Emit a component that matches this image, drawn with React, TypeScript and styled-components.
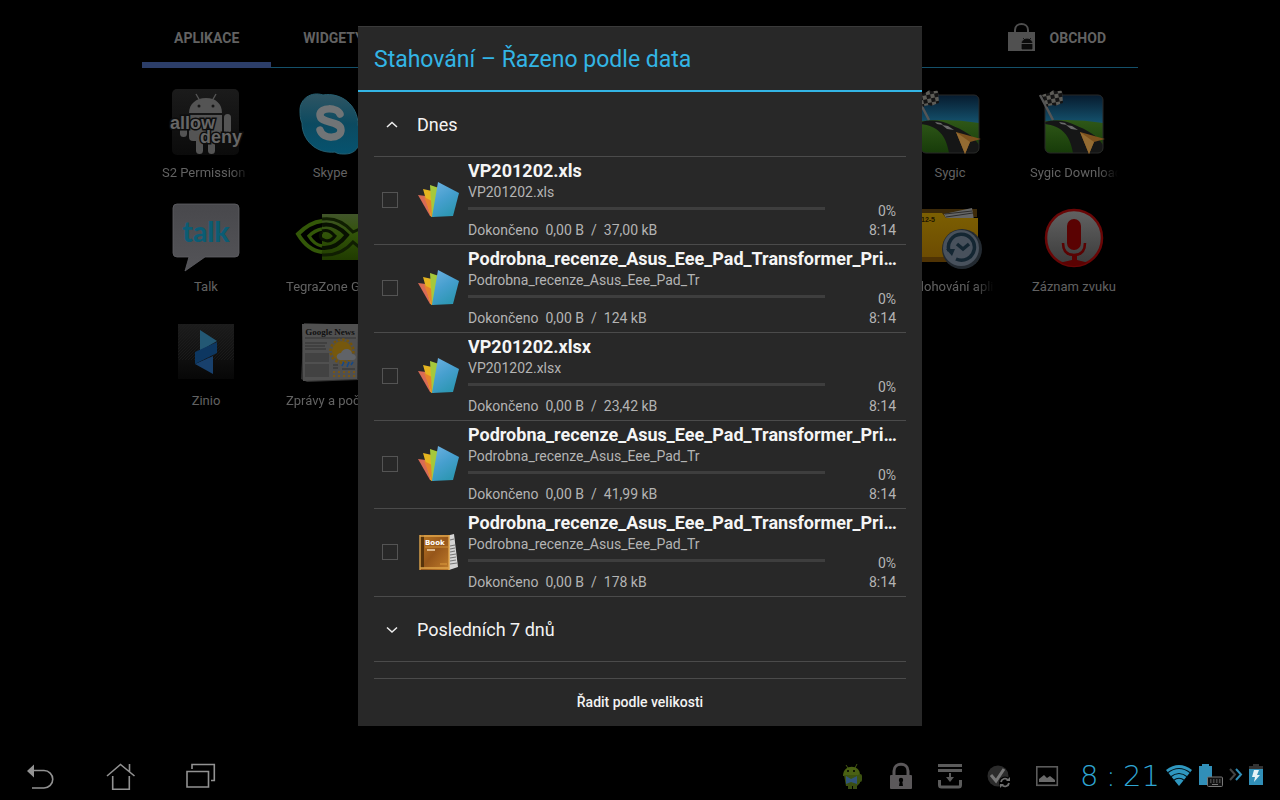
import React from "react";
import styled, { createGlobalStyle } from "styled-components";

const GlobalStyle = createGlobalStyle`
  * { box-sizing: border-box; }
  body { margin: 0; background: #000; color: #eee; font-family: Roboto, "Noto Sans", sans-serif; }
  button { border: 0; margin: 0; padding: 0; background: none; color: inherit; font: inherit; cursor: pointer; }
  h1, h2, p { margin: 0; font-weight: 400; }
  svg { display: block; flex: none; }
`;

const Screen = styled.div`
  display: flex;
  flex-direction: column;
  min-height: 100vh;
`;

const Workspace = styled.div`
  position: relative;
  flex: 1;
  display: flex;
  flex-direction: column;
`;

const Launcher = styled.main`
  width: 100%;
  max-width: 996px;
  margin: 0 auto;
  color: #626262;
`;

const TabBar = styled.div`
  display: flex;
  align-items: stretch;
  height: 68px;
  border-bottom: 1px solid #14506a;
`;

const Tab = styled.button<{ $active?: boolean }>`
  padding: 18px 32px 4px;
  margin-bottom: -1px;
  border-bottom: ${(p) => (p.$active ? "6px solid #2c3e69" : "0")};
  padding-bottom: ${(p) => (p.$active ? "4px" : "10px")};
  font-size: 14px;
  font-weight: 700;
  text-transform: uppercase;
`;

const StoreButton = styled.button`
  display: flex;
  align-items: center;
  gap: 13px;
  margin-left: auto;
  padding: 8px 32px 0 0;
  font-size: 14px;
  font-weight: 700;
`;

const AppGrid = styled.div`
  display: grid;
  grid-template-columns: repeat(8, 1fr);
  padding: 18px 2px;
`;

const AppCell = styled.button<{ $column: number; $row: number }>`
  grid-column: ${(p) => p.$column};
  grid-row: ${(p) => p.$row};
  display: flex;
  flex-direction: column;
  align-items: center;
  gap: 6px;
  padding-bottom: 18px;
`;

const AppLabel = styled.span<{ $fade?: boolean }>`
  width: 88px;
  overflow: hidden;
  white-space: nowrap;
  font-size: 13px;
  line-height: 18px;
  text-align: ${(p) => (p.$fade ? "left" : "center")};
  mask-image: ${(p) => (p.$fade ? "linear-gradient(to right, #000 78%, transparent)" : "none")};
`;

const Overlay = styled.div`
  position: absolute;
  inset: 0;
  display: flex;
  align-items: center;
  justify-content: center;
`;

const Dialog = styled.section`
  width: 564px;
  max-width: 100%;
  background: #282828;
  box-shadow: inset 0 1px #3a3a3a;
`;

const DialogTitle = styled.h1`
  padding: 19px 16px 15px;
  border-bottom: 2px solid #33b5e5;
  color: #33b5e5;
  font-size: 23px;
  line-height: 30px;
`;

const DialogBody = styled.div`
  padding: 0 16px;
`;

const GroupButton = styled.button`
  display: flex;
  align-items: center;
  gap: 19px;
  width: 100%;
  padding: 21px 12px 19px;
  border-bottom: 1px solid #4b4b4b;
  color: #f3f3f3;
  font-size: 18px;
  line-height: 24px;
`;

const FileList = styled.ul`
  margin: 0;
  padding: 0;
  list-style: none;
`;

const FileRow = styled.li`
  display: flex;
  align-items: center;
  padding: 3px 10px 4px 8px;
  border-bottom: 1px solid #4b4b4b;
`;

const Tick = styled.input`
  appearance: none;
  flex: none;
  width: 16px;
  height: 16px;
  margin: 0 20px 0 0;
  border: 1px solid #545454;
  &:checked { background: #33b5e5; }
`;

const FileInfo = styled.div`
  flex: 1;
  min-width: 0;
  margin-left: 8px;
  color: #b4b4b4;
  font-size: 14px;
  line-height: 20px;
`;

const FileTitle = styled.label`
  display: block;
  margin-right: -6px;
  overflow: hidden;
  text-overflow: ellipsis;
  white-space: nowrap;
  color: #f5f5f5;
  font-size: 18px;
  font-weight: 700;
  line-height: 22px;
`;

const FileDetails = styled.div`
  display: flex;
`;

const Transfer = styled.div`
  flex: 1;
`;

const Progress = styled.progress`
  appearance: none;
  display: block;
  width: 100%;
  height: 3px;
  margin: 5px 0 10px;
  border: 0;
  background: #3e3e3e;
  &::-webkit-progress-bar { background: #3e3e3e; }
  &::-webkit-progress-value { background: #33b5e5; }
`;

const Amounts = styled.p`
  display: flex;
  gap: 7px;
`;

const Timing = styled.div`
  width: 71px;
  text-align: right;
`;

const Percent = styled.p`
  line-height: 18px;
`;

const SortButton = styled.button`
  width: 100%;
  margin-top: 16px;
  padding: 13px 0 14px;
  border-top: 1px solid #4b4b4b;
  color: #f3f3f3;
  font-size: 14px;
  font-weight: 500;
  line-height: 20px;
`;

const SystemBar = styled.footer`
  display: flex;
  align-items: center;
  height: 48px;
  padding-right: 16px;
`;

const NavButton = styled.button`
  width: 80px;
  height: 48px;
`;

const Notifications = styled.div`
  display: flex;
  gap: 25px;
  margin-left: auto;
`;

const SystemStatus = styled.div`
  display: flex;
  align-items: center;
  gap: 5px;
  margin-left: 20px;
`;

const Clock = styled.time`
  display: flex;
  justify-content: space-between;
  width: 80px;
  color: #2fa6d3;
  font-family: "DejaVu Sans", sans-serif;
  font-size: 29px;
  font-weight: 200;
  line-height: 48px;
`;

const Art = ({ children }: { children: React.ReactNode }) => (
  <svg width="76" height="72" viewBox="0 0 76 72" aria-hidden="true">{children}</svg>
);

const PermissionArt = () => (
  <Art>
    <defs>
      <linearGradient id="permBg" x1="0" y1="0" x2="0" y2="1">
        <stop offset="0" stopColor="#1b1b1b" /><stop offset="1" stopColor="#0b0b0b" />
      </linearGradient>
    </defs>
    <rect x="4" y="3" width="67" height="66" rx="5" fill="url(#permBg)" />
    <g fill="#545454">
      <path d="M21 27c0-9 7-15 17-15s16 6 16 15z" />
      <path d="M28 8l4 7M48 8l-4 7" stroke="#545454" strokeWidth="1.4" />
      <path d="M21 29h33v22q0 4-4 4H25q-4 0-4-4z" />
      <rect x="12" y="29" width="7" height="22" rx="3.5" />
      <rect x="56" y="28" width="7" height="22" rx="3.5" />
      <rect x="28" y="48" width="7" height="20" rx="3.5" />
      <rect x="40" y="48" width="7" height="20" rx="3.5" />
    </g>
    <circle cx="31" cy="20" r="1.5" fill="#161616" /><circle cx="45" cy="20" r="1.5" fill="#161616" />
    <g fontFamily="Liberation Sans, sans-serif" fontWeight="700" fontSize="18" fill="#666" stroke="#0d0d0d" strokeWidth="3" paintOrder="stroke">
      <text x="2" y="43">allow</text>
      <text x="32" y="57">deny</text>
    </g>
  </Art>
);

const SkypeArt = () => (
  <Art>
    <defs>
      <linearGradient id="skype" x1="0" y1="0" x2="0" y2="1">
        <stop offset="0" stopColor="#2f5563" /><stop offset=".5" stopColor="#0c4a60" /><stop offset="1" stopColor="#06536f" />
      </linearGradient>
    </defs>
    <path d="M8 24C8 13 19 5 31 9c18-3 35 10 35 30 5 11 3 29-13 29-5 0-7 0-10-2-19 2-33-12-33-29-2-4-2-9-2-13z" fill="url(#skype)" stroke="#255e70" strokeWidth="1" />
    <path d="M48 28c-3-7-20-7-20 1 0 9 21 5 21 15 0 9-18 10-21 0" fill="none" stroke="#707476" strokeWidth="7.5" strokeLinecap="round" />
  </Art>
);

const TalkArt = () => (
  <Art>
    <defs>
      <linearGradient id="talk" x1="0" y1="0" x2="0" y2="1">
        <stop offset="0" stopColor="#48484c" /><stop offset="1" stopColor="#545458" />
      </linearGradient>
    </defs>
    <path d="M9 4h58q4 0 4 4v45q0 4-4 4H37L17 71l4-14H9q-4 0-4-4V8q0-4 4-4z" fill="url(#talk)" stroke="#606064" strokeWidth=".8" />
    <text x="38" y="42" textAnchor="middle" fontFamily="Lato, sans-serif" fontWeight="900" fontSize="28" fill="#0b5c74">talk</text>
  </Art>
);

const TegraArt = () => (
  <Art>
    <defs>
      <linearGradient id="tegra" x1="0" y1="0" x2="0" y2="1">
        <stop offset="0" stopColor="#41552a" /><stop offset=".45" stopColor="#315308" /><stop offset="1" stopColor="#203b00" />
      </linearGradient>
    </defs>
    <path d="M30 14h42v46H30z" fill="url(#tegra)" />
    <g fill="none" strokeWidth="4">
      <path d="M30 21C20 22 11 29 6 34c6 10 14 17 24 18" stroke="#335708" />
      <path d="M30 29c-6 1-10 4-13 7 3 5 7 9 13 10" stroke="#335708" strokeWidth="3.4" />
      <path d="M30 25c10-2 18 3 25 10-7 9-15 14-25 13" stroke="#081001" />
      <path d="M30 31c7-2 10 2 13 5-3 4-7 6-11 4-4-1-5-5-2-8" stroke="#081001" strokeWidth="3" />
      <path d="M30 19c14-2 24 5 31 13l11-5M30 55c16 1 25-6 31-13l11 9" stroke="#101e02" strokeWidth="3" />
    </g>
  </Art>
);

const ZinioArt = () => (
  <Art>
    <defs>
      <pattern id="zinioLines" width="3" height="3" patternUnits="userSpaceOnUse">
        <path d="M0 3L3 0" stroke="#1d1d1d" strokeWidth=".8" />
      </pattern>
      <linearGradient id="zinioBg" x1="0" y1="0" x2="0" y2="1">
        <stop offset="0" stopColor="#1c1c1c" /><stop offset="1" stopColor="#070707" />
      </linearGradient>
    </defs>
    <path d="M10 10h56v55H10z" fill="url(#zinioBg)" />
    <path d="M10 10h56v36H10z" fill="url(#zinioLines)" />
    <path d="M32 16l17 11-17 10z" fill="#235874" />
    <path d="M27 50l18-8v18z" fill="#18406c" />
    <path d="M49 28v11L27 50V38z" fill="#0d3761" />
  </Art>
);

const NewsArt = () => (
  <Art>
    <path d="M12 9l54 2 1 55-52 2-6-3z" fill="#303030" />
    <path d="M10 10h56l-1 55-54 2z" fill="#505050" />
    <text x="38" y="21" textAnchor="middle" fontFamily="Liberation Serif, serif" fontWeight="700" fontSize="9" fill="#111">Google News</text>
    <path d="M13 24h51" stroke="#333" />
    <path d="M13 29h22M13 32h20M13 35h21" stroke="#303030" strokeWidth="1.2" />
    <path d="M13 39h24v9H13zM13 50h24v13H13z" fill="#424242" />
    <circle cx="50" cy="37" r="11.5" fill="none" stroke="#755409" strokeWidth="2.5" strokeDasharray="2.5 2" />
    <circle cx="50" cy="37" r="10" fill="#76580d" />
    <path d="M48 46c-5-1-4-7 1-7 2-6 11-5 11 1 5 0 5 6 1 6z" fill="#606368" />
    <path d="M52 48l-2 4M57 48l-2 5M61 48l-2 3" stroke="#164986" strokeWidth="1.6" />
    <path d="M41 58h22M41 62h22" stroke="#765617" strokeWidth="2" strokeDasharray="2 3" />
    <path d="M41 51h5M41 54h5M50 55h13" stroke="#303030" />
  </Art>
);

const SygicArt = () => (
  <Art>
    <defs>
      <linearGradient id="sygicSky" x1="0" y1="0" x2="0" y2="1">
        <stop offset="0" stopColor="#071b2e" /><stop offset="1" stopColor="#155672" />
      </linearGradient>
      <linearGradient id="sygicGrass" x1="0" y1="0" x2="0" y2="1">
        <stop offset="0" stopColor="#2f5818" /><stop offset="1" stopColor="#173b09" />
      </linearGradient>
      <pattern id="flagCheck" width="8" height="8" patternUnits="userSpaceOnUse" patternTransform="rotate(-12)">
        <path d="M0 0h8v8H0z" fill="#5d5c57" /><path d="M0 0h4v4H0zM4 4h4v4H4z" fill="#141414" />
      </pattern>
      <clipPath id="sygicClip"><rect x="9" y="9" width="58" height="58" rx="5" /></clipPath>
    </defs>
    <g clipPath="url(#sygicClip)">
      <path d="M9 9h58v30H9z" fill="url(#sygicSky)" />
      <path d="M9 35q29-3 58 2v30H9z" fill="url(#sygicGrass)" />
      <path d="M9 36c12-3 22-1 30 3 12 5 22 10 28 20v8H37c-3-19-12-27-28-29z" fill="#151616" />
      <path d="M23 36l6 1 2 2-6-1zM30 39l6 1 6 4-7-1z" fill="#6b6b6b" />
    </g>
    <rect x="9" y="9" width="58" height="58" rx="5" fill="none" stroke="#292929" />
    <path d="M4 9l13 25" stroke="#555" strokeWidth="2.5" />
    <path d="M6 9c6-3 6 0 11-5 4 3 6 0 9 1l1 12c-5 1-6 4-10 2-3 1-4 0-6 2z" fill="url(#flagCheck)" />
    <path d="M44 46l25 7-11 3-5 12z" fill="#7c511d" />
    <path d="M44 46l14 10-5 12z" fill="#936b32" />
  </Art>
);

const BackupArt = () => (
  <Art>
    <defs>
      <linearGradient id="folder" x1="0" y1="0" x2="0" y2="1">
        <stop offset="0" stopColor="#7c5f02" /><stop offset="1" stopColor="#6b4a02" />
      </linearGradient>
    </defs>
    <path d="M4 9h61v8H4z" fill="#3d2a09" />
    <path d="M32 14l28-6 2 12-27 1z" fill="#666" /><path d="M34 17l27-4M33 14l27-3" stroke="#2c2c2c" />
    <path d="M4 13h26l4 5h32v42q0 2-2 2H4z" fill="url(#folder)" />
    <path d="M4 57h60v5H4z" fill="#4f3304" />
    <text x="9" y="22" fontFamily="Liberation Sans, sans-serif" fontWeight="700" fontSize="7" fill="#201500">12-5</text>
    <circle cx="50" cy="49" r="20" fill="#232a31" />
    <circle cx="49" cy="48" r="18" fill="#48515c" />
    <path d="M37 51a13 13 0 1 1 7 8" fill="none" stroke="#142632" strokeWidth="3.5" />
    <path d="M34 49l9 0-3 7z" fill="#142632" />
    <path d="M45 44l6 5 6-5" fill="none" stroke="#142632" strokeWidth="3.5" />
  </Art>
);

const RecorderArt = () => (
  <Art>
    <defs>
      <linearGradient id="recorder" x1="0" y1="0" x2="0" y2="1">
        <stop offset="0" stopColor="#626262" /><stop offset="1" stopColor="#3a3a3a" />
      </linearGradient>
      <clipPath id="recorderClip"><circle cx="38" cy="38" r="28" /></clipPath>
    </defs>
    <circle cx="38" cy="38" r="28" fill="url(#recorder)" stroke="#690606" strokeWidth="2.5" />
    <g fill="#5a0202">
      <rect x="31" y="19" width="14" height="31" rx="7" />
      <path d="M36 54h5v6l12 3v8H23v-8l13-3z" clipPath="url(#recorderClip)" />
    </g>
    <path d="M27 43c0 8 4 12 11 12s11-4 11-12" fill="none" stroke="#5a0202" strokeWidth="2.5" />
  </Art>
);

const StoreIcon = () => (
  <svg width="29" height="30" viewBox="0 0 29 30" aria-hidden="true">
    <path d="M7 10V7c0-8 13-8 13 0v3" fill="none" stroke="#4e4e4e" strokeWidth="2" />
    <path d="M0 9h27v19H0z" fill="#505050" />
    <path d="M14 20a5 4 0 0 1 10 0zM14 21h10v5H14zM15 15l2 2M23 15l-2 2" fill="#0b0b0b" stroke="#0b0b0b" strokeWidth=".8" />
    <path d="M13 20.500h11" stroke="#505050" />
  </svg>
);

const Chevron = ({ up }: { up?: boolean }) => (
  <svg width="12" height="8" viewBox="0 0 12 8" fill="none" stroke="#eee" strokeWidth="1.5" aria-hidden="true">
    <path d={up ? "M1 6l5-4.500L11 6" : "M1 1.500L6 6l5-4.500"} />
  </svg>
);

const SheetsIcon = () => (
  <svg width="42" height="40" viewBox="0 0 42 40" aria-hidden="true">
    <defs>
      <linearGradient id="sheetBlue" x1="0" y1="0" x2=".5" y2="1">
        <stop offset="0" stopColor="#6fb2e2" /><stop offset=".55" stopColor="#469fce" /><stop offset="1" stopColor="#2e97b4" />
      </linearGradient>
    </defs>
    <path d="M0 15l8 1 6 20-2 0z" fill="#d96b55" />
    <path d="M5 9l9 2 2 25-3 1z" fill="#e5b520" />
    <path d="M6 17l8 4v16z" fill="#e7832d" />
    <path d="M12 5l9 3-5 29-2-1z" fill="#a5c83c" />
    <path d="M20 2l21 11-6 23-21 1z" fill="url(#sheetBlue)" />
  </svg>
);

const BookIcon = () => (
  <svg width="42" height="40" viewBox="0 0 42 40" aria-hidden="true">
    <defs>
      <linearGradient id="bookCover" x1="0" y1="0" x2="1" y2="1">
        <stop offset="0" stopColor="#b97824" /><stop offset=".5" stopColor="#96561a" /><stop offset="1" stopColor="#c07c2b" />
      </linearGradient>
    </defs>
    <path d="M28 4l8-2 4 33-9 3z" fill="#d5d5d5" />
    <path d="M32 8l4-1M32 14l5-1M32 17l5-1M32 20l5-1M32 23l6-1M32 26l6-1M32 29l6-1M32 32l7-1" stroke="#777" strokeWidth="1.2" />
    <path d="M2 3h29v35H2z" fill="url(#bookCover)" />
    <path d="M2 3h4v33H2z" fill="#56330c" />
    <path d="M2 4h29M2 36h29M31 3v35M2 3v35" stroke="#e0a54b" strokeWidth="1.4" />
    <path d="M7 15h23" stroke="#d19138" />
    <text x="7" y="13" fontFamily="DejaVu Sans, sans-serif" fontWeight="700" fontSize="7" fill="#fff">Book</text>
    <path d="M9 18h8" stroke="#f0d6b0" strokeWidth="1.5" /><path d="M22 32h7" stroke="#dc9c3f" />
  </svg>
);

const NavIcon = ({ d, fill }: { d: string; fill?: string }) => (
  <svg width="80" height="48" viewBox="0 0 80 48" fill="none" stroke="#929292" strokeWidth="1.6" aria-hidden="true">
    <path d={d} />
    {fill && <path d={fill} fill="#929292" stroke="none" />}
  </svg>
);

const Note = ({ label, children }: { label: string; children: React.ReactNode }) => (
  <svg width="24" height="28" viewBox="0 0 24 28" role="img" aria-label={label}>{children}</svg>
);

const apps = [
  { name: "S2 Permission Checker", column: 1, row: 1, art: <PermissionArt />, fade: true },
  { name: "Skype", column: 2, row: 1, art: <SkypeArt /> },
  { name: "Sygic", column: 7, row: 1, art: <SygicArt /> },
  { name: "Sygic Downloader", column: 8, row: 1, art: <SygicArt />, fade: true },
  { name: "Talk", column: 1, row: 2, art: <TalkArt /> },
  { name: "TegraZone Games", column: 2, row: 2, art: <TegraArt />, fade: true },
  { name: "Zálohování aplikací", column: 7, row: 2, art: <BackupArt />, fade: true },
  { name: "Záznam zvuku", column: 8, row: 2, art: <RecorderArt /> },
  { name: "Zinio", column: 1, row: 3, art: <ZinioArt /> },
  { name: "Zprávy a počasí", column: 2, row: 3, art: <NewsArt />, fade: true },
];

const longTitle = "Podrobna_recenze_Asus_Eee_Pad_Transformer_Prime";
const longName = "Podrobna_recenze_Asus_Eee_Pad_Tr";
const files = [
  { title: "VP201202.xls", name: "VP201202.xls", size: "37,00 kB" },
  { title: longTitle, name: longName, size: "124 kB" },
  { title: "VP201202.xlsx", name: "VP201202.xlsx", size: "23,42 kB" },
  { title: longTitle, name: longName, size: "41,99 kB" },
  { title: longTitle, name: longName, size: "178 kB", book: true },
];

export default function App() {
  return (
    <Screen>
      <GlobalStyle />
      <Workspace>
        <Launcher>
          <TabBar>
            <Tab $active>Aplikace</Tab>
            <Tab>Widgety</Tab>
            <StoreButton><StoreIcon />OBCHOD</StoreButton>
          </TabBar>
          <AppGrid>
            {apps.map((a) => (
              <AppCell key={a.name} $column={a.column} $row={a.row}>
                {a.art}
                <AppLabel $fade={a.fade}>{a.name}</AppLabel>
              </AppCell>
            ))}
          </AppGrid>
        </Launcher>
        <Overlay>
          <Dialog role="dialog" aria-labelledby="dialog-title">
            <DialogTitle id="dialog-title">Stahování – Řazeno podle data</DialogTitle>
            <DialogBody>
              <GroupButton aria-expanded="true"><Chevron up />Dnes</GroupButton>
              <FileList>
                {files.map((f, i) => (
                  <FileRow key={i}>
                    <Tick type="checkbox" id={`file-${i}`} />
                    {f.book ? <BookIcon /> : <SheetsIcon />}
                    <FileInfo>
                      <FileTitle htmlFor={`file-${i}`}>{f.title}</FileTitle>
                      <p>{f.name}</p>
                      <FileDetails>
                        <Transfer>
                          <Progress value={0} max={100} aria-label={f.title} />
                          <Amounts><span>Dokončeno</span><span>0,00 B</span><span>/</span><span>{f.size}</span></Amounts>
                        </Transfer>
                        <Timing><Percent>0%</Percent><p>8:14</p></Timing>
                      </FileDetails>
                    </FileInfo>
                  </FileRow>
                ))}
              </FileList>
              <GroupButton aria-expanded="false"><Chevron />Posledních 7 dnů</GroupButton>
              <SortButton>Řadit podle velikosti</SortButton>
            </DialogBody>
          </Dialog>
        </Overlay>
      </Workspace>
      <SystemBar>
        <NavButton aria-label="Zpět">
          <NavIcon d="M33 18.5h11a8.7 8.7 0 0 1 0 17.500H32" fill="M27 19l7-6.500v13z" />
        </NavButton>
        <NavButton aria-label="Domů">
          <NavIcon d="M27 24l13.500-11.500L54.500 24M49.500 12v7.500M32.700 24v13.300h16.600V24" />
        </NavButton>
        <NavButton aria-label="Poslední aplikace">
          <NavIcon d="M27 19.500h21.500v15.500H27zM32 17v-4.500h22.300v16H51" />
        </NavButton>
        <Notifications>
          <Note label="Android">
            <path d="M6 3l2 3M17 2l-2 4" stroke="#455914" />
            <path d="M3 14C3 2 20 2 20 13z" fill="#4a6113" />
            <path d="M4 13h16v8l-3 3H6z" fill="#3c5210" />
            <rect x="18" y="12" width="4" height="8" rx="2" fill="#3c5210" />
            <path d="M8 21h4v6H8zM13 21h4v6h-4z" fill="#3a4d12" />
            <path d="M6 14l5 3 6-3v8l-6-2-5 2z" fill="#31547a" />
            <circle cx="8" cy="9" r="1" /><circle cx="14" cy="9" r="1" />
          </Note>
          <Note label="Zámek">
            <path d="M5 14V9c0-9 14-9 14 0v5" fill="none" stroke="#5b585a" strokeWidth="3" />
            <rect x="1" y="13" width="22" height="14" rx="1" fill="#5b585a" />
            <circle cx="12" cy="18" r="2.200" /><path d="M11 18h2l1 6h-4z" />
          </Note>
          <Note label="Stahování">
            <g fill="none" stroke="#5b5b5b">
              <path d="M0 3.500h24M0 8.500h24" strokeWidth="3" />
              <path d="M1.500 18v5q0 2 2 2h17q2 0 2-2v-5" strokeWidth="3" />
              <path d="M12 11v5" strokeWidth="2" />
            </g>
            <path d="M8 15h8l-4 5z" fill="#5b5b5b" />
          </Note>
          <Note label="Synchronizace">
            <circle cx="11" cy="14" r="10.500" fill="#2b2b2b" />
            <path d="M4 13l5 6 8-12" fill="none" stroke="#777" strokeWidth="3" />
            <circle cx="18" cy="20.500" r="6" />
            <path d="M14 20a4 4 0 0 1 7-2M22 21a4 4 0 0 1-7 2" fill="none" stroke="#707070" strokeWidth="1.800" />
            <path d="M19 19h4v-4zM17 22h-4v4z" fill="#707070" />
          </Note>
          <Note label="Obrázek">
            <rect x=".8" y="4.800" width="20.500" height="18.500" fill="none" stroke="#5b5b5b" strokeWidth="1.600" />
            <path d="M3 20v-3l5-4 3 3 3-2 5 4v2z" fill="#6a6a6a" />
          </Note>
        </Notifications>
        <SystemStatus>
          <Clock><span>8</span><span>:</span><span>21</span></Clock>
          <svg width="28" height="28" viewBox="0 0 28 28" role="img" aria-label="Wi-Fi">
            <path d="M1 8Q14-2 27 8L14 24z" fill="#2f97bf" />
            <g fill="none" stroke="#04141b" strokeWidth="1.200">
              <path d="M2.500 11Q14 2 25.500 11" /><path d="M5.500 15Q14 8 22.500 15" /><path d="M8.500 18.500Q14 14 19.500 18.500" />
            </g>
          </svg>
          <svg width="26" height="28" viewBox="0 0 26 28" role="img" aria-label="Baterie klávesnice">
            <path d="M1 4h3V2h7v2h3v19H1z" fill="#318fb8" />
            <rect x="9.500" y="15" width="15" height="9.500" rx="1" fill="#111" stroke="#777" />
            <path d="M12 18h11M12 20h11" stroke="#777" strokeDasharray="1.500 1.500" /><path d="M14 22.500h6" stroke="#777" />
          </svg>
          <svg width="14" height="28" viewBox="0 0 14 28" fill="none" strokeWidth="2" aria-hidden="true">
            <path d="M1 7l5 5.500L1 18" stroke="#444" /><path d="M7 7l5 5.500L7 18" stroke="#318fb8" />
          </svg>
          <svg width="16" height="28" viewBox="0 0 16 28" role="img" aria-label="Nabíjení">
            <path d="M1 4h4V2h6v2h4v3H1z" fill="#333" /><path d="M1 7h14v16H1z" fill="#318fb8" />
            <path d="M6 8h5l-2 5h3l-6 7 1-5H4z" fill="#e7f2f7" />
          </svg>
        </SystemStatus>
      </SystemBar>
    </Screen>
  );
}
